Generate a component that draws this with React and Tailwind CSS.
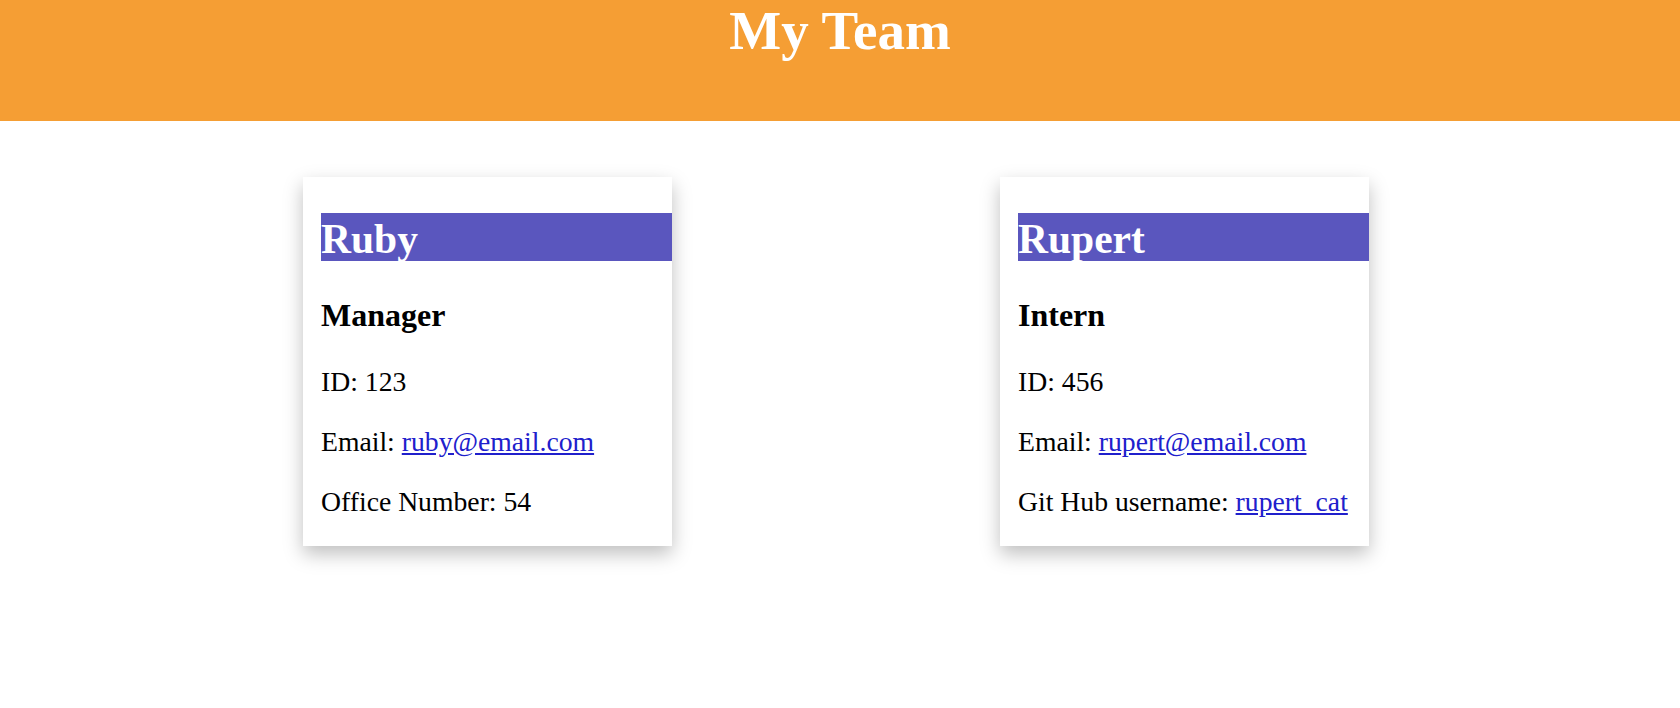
import React from 'react'

const team = [
  {
    name: 'Ruby',
    role: 'Manager',
    id: 123,
    email: 'ruby@email.com',
    extraLabel: 'Office Number:',
    extra: '54',
  },
  {
    name: 'Rupert',
    role: 'Intern',
    id: 456,
    email: 'rupert@email.com',
    extraLabel: 'Git Hub username:',
    extra: 'rupert_cat',
    extraLink: true,
  },
]

function Card({ member }) {
  return (
    <div className="w-[369px] bg-white pl-[18px] pt-[36px] pb-[28px] shadow-[0_8px_18px_0_rgba(0,0,0,0.25)]">
      <h2 className="bg-[#5a56be] text-white font-bold text-[41.5px] leading-[48px] pt-[2px] h-[48px] whitespace-nowrap">{member.name}</h2>
      <h3 className="mt-[36px] font-bold text-[32px] leading-[36px]">{member.role}</h3>
      <div className="mt-[33px] flex flex-col gap-[28px] text-[27.7px] leading-[32px]">
        <p>ID: {member.id}</p>
        <p>
          Email: <a href="#" className="text-[#2020cc] underline">{member.email}</a>
        </p>
        <p className="whitespace-nowrap">
          {member.extraLabel}{' '}
          {member.extraLink ? (
            <a href="#" className="text-[#2020cc] underline">{member.extra}</a>
          ) : (
            member.extra
          )}
        </p>
      </div>
    </div>
  )
}

export default function App() {
  return (
    <div className="min-h-[708px] bg-white text-black font-['Liberation_Serif',serif]">
      <header className="h-[121px] bg-[#f59e34]">
        <h1 className="text-center text-white font-bold text-[55px] leading-[61px]">My Team</h1>
      </header>
      <main className="flex justify-center gap-[328px] pr-[8px] pt-[56px]">
        {team.map((m) => (
          <Card key={m.name} member={m} />
        ))}
      </main>
    </div>
  )
}
